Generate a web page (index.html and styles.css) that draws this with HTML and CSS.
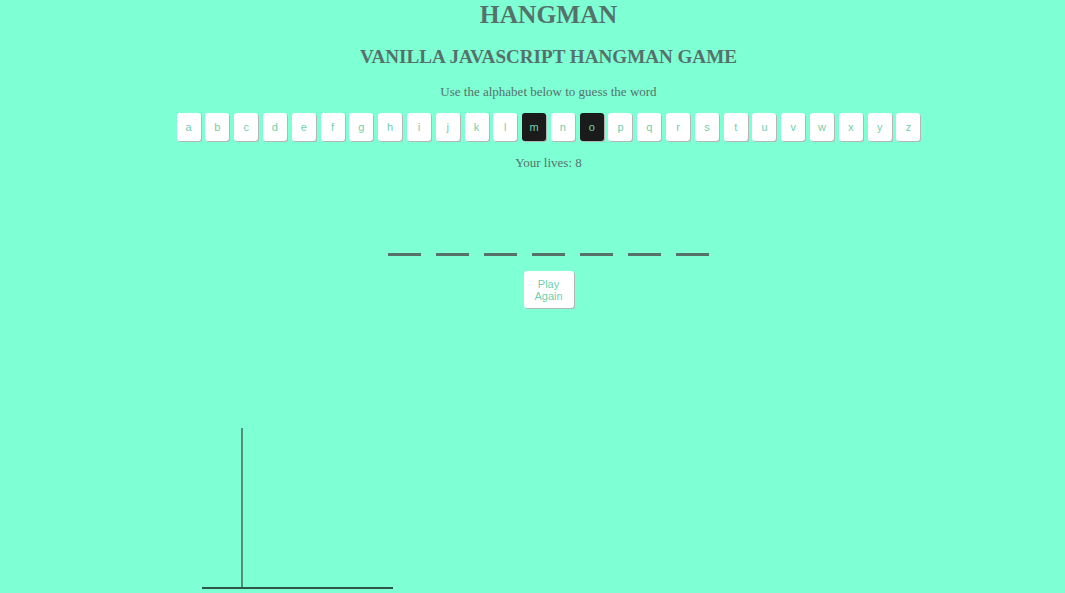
FILE: index.html
```html
<!DOCTYPE html>
<html>
<head>
<meta charset="utf-8">
<title>Hangman</title>
<link rel="stylesheet" href="styles.css">
</head>
<body>
<div class="wrap">
  <h1 class="title">HANGMAN</h1>
  <h2 class="subtitle">VANILLA JAVASCRIPT HANGMAN GAME</h2>
  <p class="hint">Use the alphabet below to guess the word</p>
  <ul class="alphabet">
    <li class="key">a</li><li class="key">b</li><li class="key">c</li><li class="key">d</li><li class="key">e</li><li class="key">f</li><li class="key">g</li><li class="key">h</li><li class="key">i</li><li class="key">j</li><li class="key">k</li><li class="key">l</li><li class="key active">m</li><li class="key">n</li><li class="key active">o</li><li class="key">p</li><li class="key">q</li><li class="key">r</li><li class="key">s</li><li class="key">t</li><li class="key">u</li><li class="key">v</li><li class="key">w</li><li class="key">x</li><li class="key">y</li><li class="key">z</li>
  </ul>
  <p class="lives">Your lives: 8</p>
  <ul class="word">
    <li class="blank"></li><li class="blank"></li><li class="blank"></li><li class="blank"></li><li class="blank"></li><li class="blank"></li><li class="blank"></li>
  </ul>
  <button class="reset">Play<br>Again</button>
</div>
<div class="stage">
  <svg class="gallows" width="200" height="170" viewBox="0 0 200 170">
    <line x1="40" y1="0" x2="40" y2="160" stroke="#4f8f7b" stroke-width="2"/>
    <line x1="0" y1="160" x2="191" y2="160" stroke="#2d5649" stroke-width="2"/>
  </svg>
</div>
</body>
</html>
```
FILE: styles.css
```css
html, body {
  margin: 0;
  padding: 0;
  background: #7fffd4;
}
body {
  font-family: "Liberation Serif", "Times New Roman", serif;
  color: #56716a;
  overflow: hidden;
  height: 593px;
}
.wrap {
  display: flex;
  flex-direction: column;
  align-items: center;
  padding-left: 32px;
}
.title {
  margin: 0;
  font-size: 25.5px;
  line-height: 30px;
  font-weight: bold;
}
.subtitle {
  margin: 16px 0 0;
  font-size: 19.1px;
  line-height: 22px;
  font-weight: bold;
}
.hint {
  margin: 16px 0 0;
  font-size: 13px;
  line-height: 16px;
}
.alphabet {
  list-style: none;
  margin: 13px 0 0;
  padding: 0;
  display: flex;
  gap: 4.8px;
}
.key {
  width: 24px;
  height: 28px;
  box-sizing: border-box;
  background: #fff;
  border-radius: 3px;
  box-shadow: 1px 1px 0 #b5b5b5;
  display: flex;
  align-items: center;
  justify-content: center;
  font-family: "Liberation Sans", Arial, sans-serif;
  font-size: 11px;
  color: #6fd0ae;
}
.key.active {
  background: #1b1b1b;
  color: #6fd0ae;
}
.lives {
  margin: 14px 0 0;
  font-size: 13px;
  line-height: 16px;
}
.word {
  list-style: none;
  margin: 82px 0 0;
  padding: 0;
  display: flex;
  gap: 15px;
}
.blank {
  width: 33px;
  height: 3px;
  background: #56716a;
}
.reset {
  margin-top: 15px;
  width: 50px;
  height: 37px;
  padding: 0;
  border: none;
  border-radius: 3px;
  background: #fff;
  box-shadow: 1px 1px 0 #b5b5b5;
  font-family: "Liberation Sans", Arial, sans-serif;
  font-size: 11px;
  line-height: 12px;
  color: #6fd0ae;
}
.stage {
  margin-top: 120px;
  padding-left: 202px;
}
.gallows {
  display: block;
}
```
